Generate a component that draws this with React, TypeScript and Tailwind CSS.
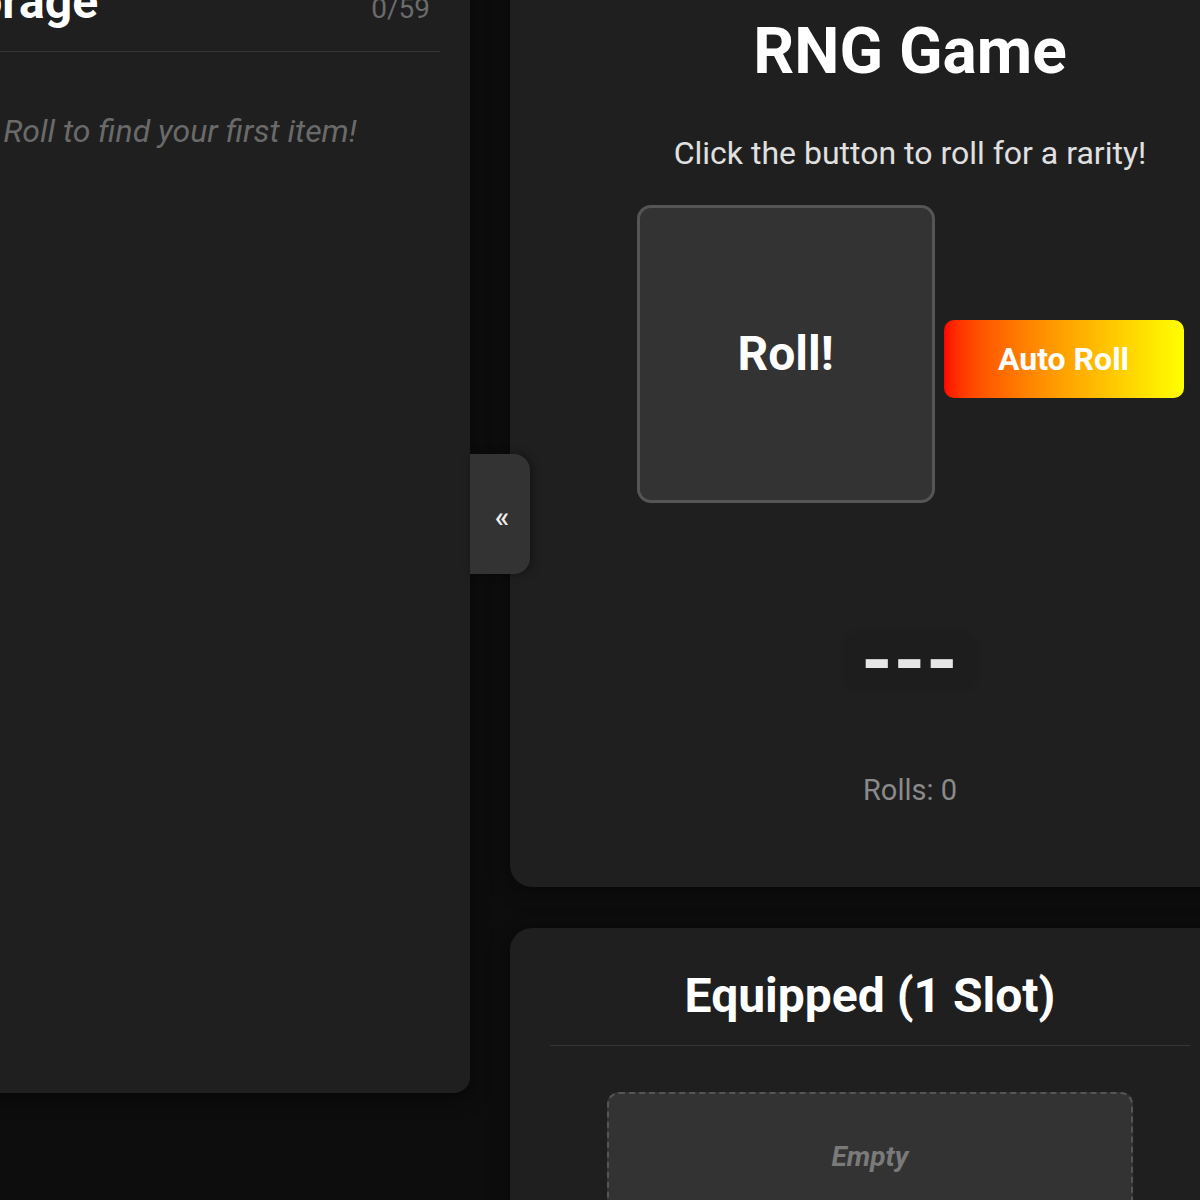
import React from "react";

export default function App() {
  return (
    <div
      className="w-[1200px] h-[1200px] overflow-hidden bg-[#0d0d0d] text-white"
      style={{ fontFamily: "Roboto, 'Liberation Sans', sans-serif" }}
    >
      <div className="flex items-start gap-[40px] -ml-[110px] -mt-[67px]">
        {/* Storage panel */}
        <div className="relative z-10 w-[580px] h-[1160px] shrink-0 bg-[#1f1f1f] rounded-[16px] pt-[40px] px-[30px] shadow-[0_4px_20px_rgba(0,0,0,0.5)]">
          <div className="flex items-baseline justify-between px-[10px] pb-[20px] border-b border-[#363636]">
            <h2 className="text-[48px] leading-[1.2] font-bold">Storage</h2>
            <span className="text-[28px] text-[#6b6b6b]">0/59</span>
          </div>
          <p className="mt-[55px] text-center text-[32px] leading-[1.5] italic text-[#6a6a6a]">
            Roll to find your first item!
          </p>
          <button className="absolute left-full top-[521px] w-[60px] h-[120px] flex items-center justify-center bg-[#333333] rounded-r-[16px] text-[30px] font-medium text-[#eeeeee] shadow-[2px_0_10px_rgba(0,0,0,0.4)]">
            <span className="mt-[4px] ml-[4px]">«</span>
          </button>
        </div>

        {/* Right column */}
        <div className="flex flex-col gap-[41px] w-[800px] shrink-0">
          <div className="h-[954px] bg-[#1f1f1f] rounded-[22px] pt-[40px] flex flex-col items-center shadow-[0_4px_20px_rgba(0,0,0,0.5)]">
            <h1 className="mt-[41px] text-[64px] leading-[1.2] font-bold">RNG Game</h1>
            <p className="mt-[38px] text-[32px] leading-[1.5] text-[#e0e0e0]">
              Click the button to roll for a rarity!
            </p>
            <div className="mt-[28px] flex items-center gap-[9px]">
              <button className="w-[298px] h-[298px] rounded-[14px] bg-[#333333] border-[3px] border-[#555555] text-[48px] font-bold text-white">
                Roll!
              </button>
              <button className="mt-[10px] w-[240px] h-[78px] rounded-[10px] bg-gradient-to-r from-[#ff0000] via-[#ffa200] to-[#ffff00] text-[32px] font-bold text-white">
                Auto Roll
              </button>
            </div>
            <div className="mt-[132px] h-[52px] px-[14px] rounded-[10px] flex items-center justify-center bg-[#1d1d1d] shadow-[0_0_8px_rgba(0,0,0,0.15)] text-[80px] leading-[52px] font-bold tracking-[1px] text-[#e6e6e6]">
              ---
            </div>
            <p className="mt-[82px] text-[29px] leading-[1.5] text-[#8a8a8a]">Rolls: 0</p>
          </div>

          <div className="w-[720px] h-[400px] bg-[#1f1f1f] rounded-[22px] pt-[39px] px-[40px] shadow-[0_4px_20px_rgba(0,0,0,0.5)]">
            <h2 className="pb-[20px] border-b border-[#363636] text-center text-[48px] leading-[1.2] font-bold">
              Equipped (1 Slot)
            </h2>
            <div className="mt-[46px] mx-auto w-[526px] h-[130px] rounded-[12px] bg-[#333333] border-2 border-dashed border-[#555555] flex items-center justify-center">
              <span className="text-[28px] font-bold italic text-[#7a7a7a]">Empty</span>
            </div>
          </div>
        </div>
      </div>
    </div>
  );
}
